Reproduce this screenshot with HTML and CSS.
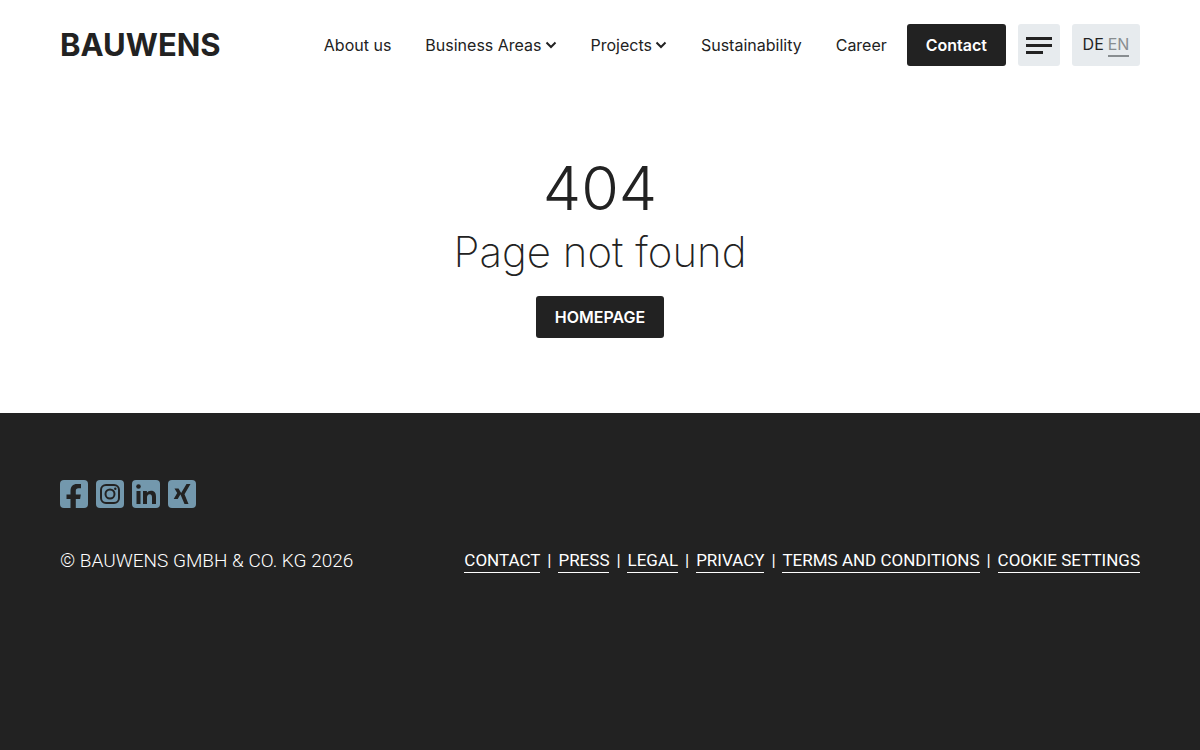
FILE: index.html
```html
<!DOCTYPE html>
<html lang="en">
<head>
    <meta charset="UTF-8">
    <meta name="viewport" content="width=device-width, initial-scale=1.0">
    <title>Page not found - BAUWENS</title>
    <link rel="stylesheet" href="styles.css">
</head>
<body>
    <header class="header">
        <a class="logo" href="/">BAUWENS</a>
        <nav class="nav">
            <a href="#">About us</a>
            <a href="#">Business Areas
                <svg class="chevron" viewBox="0 0 12 8"><path d="M1.500 1.500 6 6l4.500-4.500"/></svg>
            </a>
            <a href="#">Projects
                <svg class="chevron" viewBox="0 0 12 8"><path d="M1.500 1.500 6 6l4.500-4.500"/></svg>
            </a>
            <a href="#">Sustainability</a>
            <a href="#">Career</a>
        </nav>
        <div class="actions">
            <a class="btn" href="#">Contact</a>
            <button class="menu" type="button" aria-label="Menu">
                <svg viewBox="0 0 26 18"><path d="M0 1h26v3H0zM0 8h26v3H0zM0 15h17v3H0z"/></svg>
            </button>
            <div class="lang">
                <a href="#">DE</a>
                <a class="current" href="#">EN</a>
            </div>
        </div>
    </header>

    <main class="error">
        <h1>404</h1>
        <h2>Page not found</h2>
        <a class="btn" href="/">HOMEPAGE</a>
    </main>

    <footer class="footer">
        <div class="social">
            <a href="#" aria-label="Facebook">
                <svg viewBox="0 0 28 28"><path d="M10.500 28v-9H6.500v-4.500h4V11c0-4.500 2.500-7 6.500-7H21v4.300h-2.500c-2 0-2.700 1-2.700 2.500v3.700h5L20.100 19h-4.300v9z"/></svg>
            </a>
            <a href="#" aria-label="Instagram">
                <svg class="outline" viewBox="0 0 28 28"><rect x="5" y="5" width="18" height="18" rx="5"/><circle cx="14" cy="14" r="4.500"/><circle class="dot" cx="19.300" cy="8.700" r="1.200"/></svg>
            </a>
            <a href="#" aria-label="LinkedIn">
                <svg viewBox="0 0 28 28"><circle cx="6.500" cy="6.500" r="2.300"/><path d="M4.500 11h4v13h-4zM11 11h3.900v1.800c.8-1.300 2.200-2.100 4.100-2.100 3.900 0 5 2.500 5 6V24h-4v-6.600c0-1.900-.5-3.200-2.300-3.200S15 15.500 15 17.400V24h-4z"/></svg>
            </a>
            <a href="#" aria-label="Xing">
                <svg viewBox="0 0 28 28"><path d="M6.500 8.500h4l2.700 4.600L9.700 19h-4l3.500-5.900zM18.500 4h4l-6 10.300L20.500 24h-4l-4.100-9.700z"/></svg>
            </a>
        </div>
        <div class="footer-row">
            <p class="copyright">© BAUWENS GMBH &amp; CO. KG 2026</p>
            <ul class="links">
                <li><a href="#">CONTACT</a></li>
                <li><a href="#">PRESS</a></li>
                <li><a href="#">LEGAL</a></li>
                <li><a href="#">PRIVACY</a></li>
                <li><a href="#">TERMS AND CONDITIONS</a></li>
                <li><a href="#">COOKIE SETTINGS</a></li>
            </ul>
        </div>
    </footer>
</body>
</html>
```
FILE: styles.css
```css
* {
    box-sizing: border-box;
}
body {
    margin: 0;
    min-height: 100vh;
    display: flex;
    flex-direction: column;
    font-family: Inter, "Liberation Sans", sans-serif;
    font-size: 16px;
    line-height: 24px;
    color: #222;
    background: #fff;
}
a {
    color: inherit;
    text-decoration: none;
}
.header {
    display: flex;
    align-items: center;
    padding: 24px 60px;
}
.logo {
    font-size: 31px;
    font-weight: 700;
    line-height: 40px;
}
.nav {
    display: flex;
    gap: 34px;
    margin-left: auto;
    margin-right: 20px;
}
.nav a {
    display: flex;
    align-items: center;
    gap: 3px;
    white-space: nowrap;
}
.chevron {
    width: 12px;
    height: 8px;
    fill: none;
    stroke: #222;
    stroke-width: 2;
}
.actions {
    display: flex;
    gap: 12px;
}
.btn {
    padding: 9px 19px;
    border-radius: 3px;
    background: #222;
    color: #fff;
    font-weight: 600;
}
.menu {
    width: 42px;
    height: 42px;
    padding: 8px;
    border: 0;
    border-radius: 3px;
    background: #e7ebee;
    cursor: pointer;
}
.menu svg {
    display: block;
    width: 26px;
    height: 18px;
    fill: #222;
}
.lang {
    display: flex;
    justify-content: center;
    gap: 4px;
    width: 68px;
    padding: 8px 0;
    border-radius: 3px;
    background: #e7ebee;
}
.lang .current {
    height: 25px;
    color: #888d90;
    border-bottom: 2px solid #888d90;
}
.error {
    display: flex;
    flex-direction: column;
    align-items: center;
    padding: 62px 20px 75px;
}
.error h1,
.error h2 {
    margin: 0;
}
.error h1 {
    font-size: 61px;
    font-weight: 300;
    line-height: 72px;
}
.error h2 {
    margin-bottom: 16px;
    font-size: 42px;
    font-weight: 200;
    line-height: 56px;
}
.footer {
    flex: 1;
    padding: 67px 60px;
    background: #222;
    color: #fff;
}
.social {
    display: flex;
    gap: 8px;
    margin-bottom: 40px;
}
.social a {
    width: 28px;
    height: 28px;
    border-radius: 4px;
    background: #7398ad;
}
.social svg {
    display: block;
    fill: #222;
}
.social .outline {
    fill: none;
    stroke: #222;
    stroke-width: 2;
}
.social .dot {
    fill: #222;
    stroke: none;
}
.footer-row {
    display: flex;
    flex-wrap: wrap;
    justify-content: space-between;
    align-items: center;
    font-family: Roboto, "Liberation Sans", sans-serif;
}
.copyright {
    margin: 0;
    font-size: 19px;
    font-weight: 300;
}
.links {
    display: flex;
    flex-wrap: wrap;
    margin: 0;
    padding: 0;
    list-style: none;
    font-size: 17px;
}
.links li + li::before {
    content: "|";
    display: inline-block;
    width: 18px;
    text-align: center;
}
.links a {
    display: inline-block;
    border-bottom: 1px solid #fff;
}
```
